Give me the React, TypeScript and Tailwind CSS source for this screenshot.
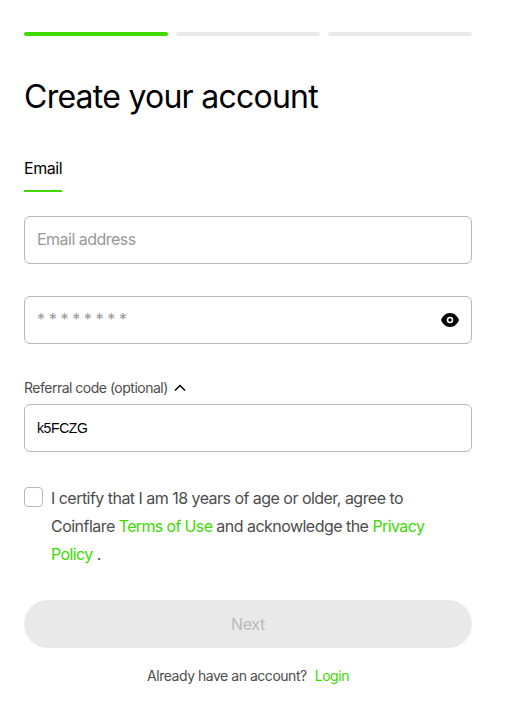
import { useState } from "react";

const STEPS = ["account", "verify", "finish"];

export default function App() {
  const [step] = useState(0);
  const [showReferral, setShowReferral] = useState(true);
  const [referralCode, setReferralCode] = useState("k5FCZG");

  return (
    <div className="h-[705px] w-[506px] overflow-hidden bg-white pl-6 pr-[34px] pt-8 font-['Inter',sans-serif] text-black">
      {/* Progress */}
      <div className="flex gap-2">
        {STEPS.map((name, i) => (
          <div
            key={name}
            className={`h-1 flex-1 rounded-full ${i <= step ? "bg-[#3dd900]" : "bg-[#eaeaea]"}`}
          />
        ))}
      </div>

      <h1 className="mt-10 text-[32px] leading-[42px] tracking-[-0.75px]">Create your account</h1>

      <div className="mt-9 flex">
        <button className="h-[38px] border-b-2 border-[#3dd900] pb-2 text-base leading-6 tracking-[-0.45px]">
          Email
        </button>
      </div>

      <input
        type="email"
        placeholder="Email address"
        className="mt-6 block h-12 w-full rounded-md border border-[#b8b8b8] px-3 pb-0.5 text-base tracking-[-0.52px] outline-none placeholder:text-[#999]"
      />

      <div className="mt-8 flex h-12 items-center rounded-md border border-[#b8b8b8] pl-3 pr-[11px]">
        <input
          type="password"
          placeholder="* * * * * * * *"
          className="min-w-0 flex-1 pb-0.5 text-base tracking-[-0.4px] outline-none placeholder:text-[#999]"
        />
        <svg width="20" height="20" viewBox="0 0 20 20" fill="none">
          <path d="M10 3C6 3 2.600 5.800 1 10c1.600 4.200 5 7 9 7s7.400-2.800 9-7C17.400 5.800 14 3 10 3Z" fill="black" />
          <circle cx="10" cy="10" r="2.500" stroke="white" strokeWidth="1.500" />
        </svg>
      </div>

      <button
        onClick={() => setShowReferral(!showReferral)}
        className="mt-8 flex h-6 items-center gap-1.5 text-sm tracking-[-0.5px] text-[#4d4d4d]"
      >
        Referral code (optional)
        <svg width="12" height="8" viewBox="0 0 12 8" fill="none" stroke="black" strokeWidth="1.500">
          <path d="M1 6.500 6 1.500l5 5" />
        </svg>
      </button>
      {showReferral && (
        <input
          value={referralCode}
          onChange={(e) => setReferralCode(e.target.value)}
          className="mt-1 block h-12 w-full rounded-md border border-[#b8b8b8] px-3 font-['Liberation_Sans',sans-serif] text-sm tracking-[-0.4px] outline-none"
        />
      )}

      <div className="mt-8 flex items-start gap-2">
        <input
          type="checkbox"
          className="mt-[3px] h-5 w-[19px] shrink-0 appearance-none rounded border border-[#b8b8b8]"
        />
        <p className="w-[390px] text-base leading-7 tracking-[-0.53px] text-[#4d4d4d]">
          I certify that I am 18 years of age or older, agree to Coinflare{" "}
          <a className="tracking-[-0.64px] text-[#3dd900]">Terms of Use</a> and acknowledge the{" "}
          <a className="tracking-[-0.6px] text-[#3dd900]">Privacy Policy</a> .
        </p>
      </div>

      <button disabled className="mt-8 h-12 w-full rounded-full bg-[#e9e9e9] text-base tracking-[-0.3px] text-[#bbb]">
        Next
      </button>

      <p className="mt-[18px] flex justify-center gap-2 text-sm leading-5 tracking-[-0.47px] text-[#4d4d4d]">
        Already have an account? <a className="text-[#3dd900]">Login</a>
      </p>
    </div>
  );
}
